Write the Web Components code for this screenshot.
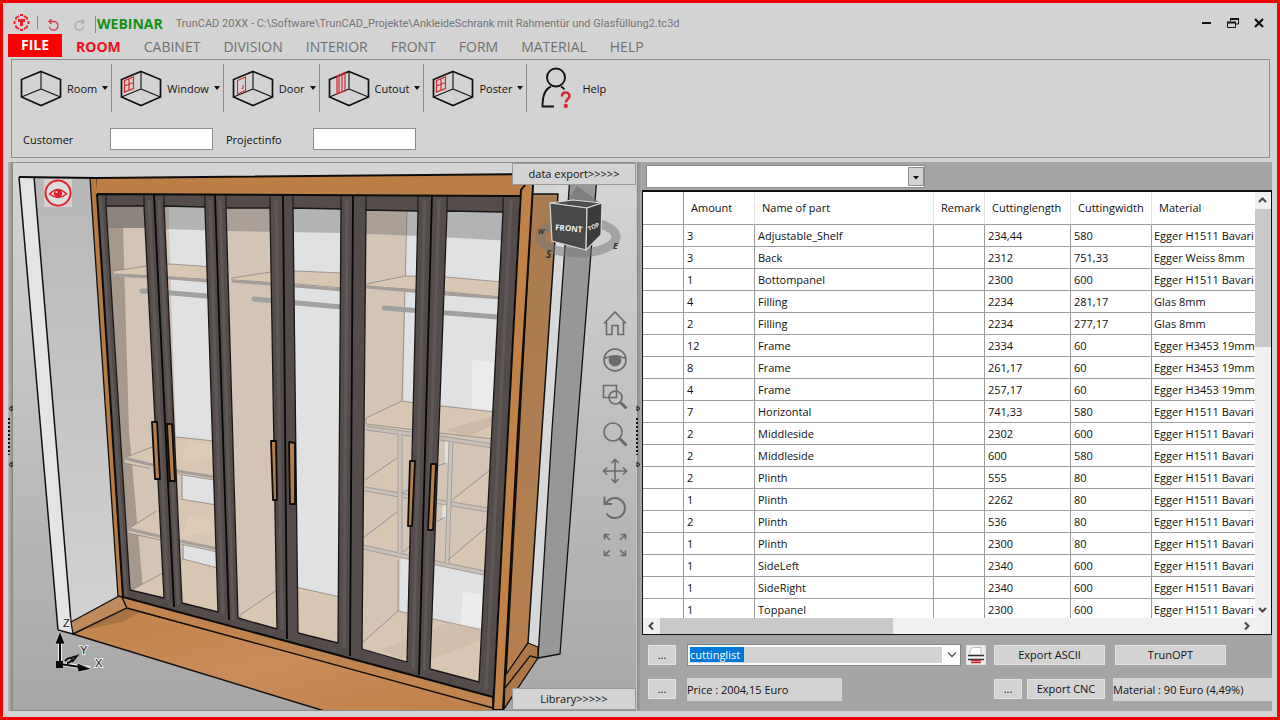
<!DOCTYPE html>
<html lang="en">
<head>
<meta charset="utf-8">
<title>TrunCAD 20XX</title>
<style>
html,body{margin:0;height:100%}
body{font-family:"Open Sans","Noto Sans",sans-serif;font-size:11px;color:#111}
</style>
</head>
<body>
<app-window>
  <title-bar slot="title" tag="WEBINAR">TrunCAD 20XX - C:\Software\TrunCAD_Projekte\AnkleideSchrank mit Rahmentür und Glasfüllung2.tc3d</title-bar>
  <ribbon-tabs slot="tabs"></ribbon-tabs>
  <ribbon-panel slot="ribbon">
    <ribbon-item icon="room" menu>Room</ribbon-item>
    <ribbon-item icon="window" menu>Window</ribbon-item>
    <ribbon-item icon="door" menu>Door</ribbon-item>
    <ribbon-item icon="cutout" menu>Cutout</ribbon-item>
    <ribbon-item icon="window" menu>Poster</ribbon-item>
    <ribbon-item icon="help">Help</ribbon-item>
    <ribbon-field slot="fields" name="customer">Customer</ribbon-field>
    <ribbon-field slot="fields" name="projectinfo">Projectinfo</ribbon-field>
  </ribbon-panel>
  <pane-splitter slot="main" side="left"></pane-splitter>
  <scene-view slot="main"></scene-view>
  <pane-splitter slot="main" side="right"></pane-splitter>
  <export-pane slot="main"></export-pane>
</app-window>

<script>
const define = (name, html, setup) => {
  const tpl = document.createElement('template');
  tpl.innerHTML = html;
  customElements.define(name, class extends HTMLElement {
    constructor() {
      super();
      this.attachShadow({mode: 'open'}).append(tpl.content.cloneNode(true));
    }
    connectedCallback() { if (setup) setup(this, this.shadowRoot); }
  });
};

define('app-window', `
<style>
:host{display:flex;flex-direction:column;box-sizing:border-box;min-height:100vh;border:3px solid #f00000;background:#d3d3d3;padding:0 5px 6px}
main{flex:1;display:grid;grid-template-columns:5px minmax(0,623fr) 6px minmax(0,630fr);margin-top:4px}
</style>
<slot name="title"></slot><slot name="tabs"></slot><slot name="ribbon"></slot>
<main><slot name="main"></slot></main>`);

define('title-bar', `
<style>
:host{display:flex;align-items:center;height:31px;padding:8px 7px 0 5px;box-sizing:border-box;color:#757575;font:11px Roboto,sans-serif}
button{all:unset;display:block;line-height:0}
i{width:1px;background:#8a8a8a;height:13px;margin:0 9px 0 7px}
i.b{height:17px;margin:3px 1px 0 9px}
b{font:bold 14px/18px "Open Sans",sans-serif;color:#149014;padding-top:3px;margin-right:13px}
.t{flex:1;white-space:nowrap;overflow:hidden;padding-top:1px}
.undo{padding:6px 15px 0 0}.redo{padding-top:6px}
.win{display:flex;gap:14px}
</style>
<svg width="17" height="17" viewBox="0 0 17 17" fill="none" stroke="#ee2030" stroke-width="2"><path d="M3 5.500V4L6 2M11 2l3 2v1.500M3 11.500V13l3 2M11 15l3-2v-1.500M1.500 7v3M15.500 7v3M7 1h3M7 16h3"/><path d="M5 5h7v3h-2v4H7V8H5z" fill="#ee2030" stroke="none"/></svg>
<i></i>
<button class="undo" aria-label="Undo"><svg width="12" height="13" viewBox="0 0 12 13" fill="none" stroke="#d43a45" stroke-width="1.300"><path d="M2 2.500h5a4.300 4.300 0 1 1-4.600 5M4.500 0 2 2.500 4.500 5"/></svg></button>
<button class="redo" aria-label="Redo"><svg width="12" height="13" viewBox="0 0 12 13" fill="none" stroke="#aaa" stroke-width="1.300"><path d="M10 2.500H5a4.300 4.300 0 1 0 4.600 5M7.500 0 10 2.500 7.500 5"/></svg></button>
<i class="b"></i><b></b>
<span class="t"><slot></slot></span>
<span class="win">
<button aria-label="Minimize"><svg width="12" height="12"><path d="M1 6h9" stroke="#111" stroke-width="2"/></svg></button>
<button aria-label="Restore"><svg width="12" height="12" fill="none" stroke="#111"><path d="M3.500 4V1.500h8V7H9"/><path d="M3 2h9" stroke-width="2"/><path d="M.500 5.500h8v5h-8z"/><path d="M0 5.500h9" stroke-width="2"/></svg></button>
<button aria-label="Close"><svg width="12" height="12"><path d="M2 2l8 8M10 2l-8 8" stroke="#111" stroke-width="2.200"/></svg></button>
</span>`, (el, r) => r.querySelector('b').textContent = el.getAttribute('tag'));

define('ribbon-tabs', `
<style>
:host{display:block}
nav{display:flex;align-items:center;gap:23px;height:23px;font-size:14px}
a{color:#6f6f6f;text-decoration:none;line-height:21px;padding-top:2px}
.file{background:#fb0000;color:#fff;font-weight:bold;width:54px;text-align:center;margin-right:-9px;padding:0 0 2px}
.on{color:#ee1020;font-weight:bold}
</style>
<nav><a class="file" href="#file">FILE</a><a class="on" href="#room">ROOM</a><a href="#cabinet">CABINET</a><a href="#division">DIVISION</a><a href="#interior">INTERIOR</a><a href="#front">FRONT</a><a href="#form">FORM</a><a href="#material">MATERIAL</a><a href="#help">HELP</a></nav>`);

define('ribbon-panel', `
<style>
:host{display:block;border:1px solid #8c8c8c;margin:2px 2px 0 3px}
.items{display:flex;height:56px;align-items:center}
.fields{display:flex;align-items:center;padding:12px 11px 7px;gap:13px}
</style>
<div class="items"><slot></slot></div>
<div class="fields"><slot name="fields"></slot></div>`);

const hexBox = inner => `<svg width="42" height="38" viewBox="0 0 42 38" fill="none" stroke="#111"><path d="M21 2.500 40.500 10.500V28L21 36.500 1.500 28V10.500z" stroke-width="1.700"/><path d="M21 2.500V20M21 20 1.500 28M21 20l19.500 8" stroke-width="1.100"/>${inner}</svg>`;
const icons = {
  room: hexBox(''),
  window: hexBox('<path d="M4.500 11.500 13.500 8v11.500L4.500 23zM9 10v11.500M4.500 17l9-3.500" stroke="#d82832" stroke-width="1.200"/>'),
  door: hexBox('<path d="M5.500 25V11.500L13.500 8v13.500zM11 16v3.500M11 19.500H9.500" stroke="#d82832" stroke-width="1.100"/>'),
  cutout: hexBox('<path d="M9 8 11 6v18l-2 1zM11 6l3-1v18l-3 1M14 5l3-1.500V22l-3 1" stroke="#d82832" stroke-width="1.200"/>'),
  help: `<svg width="32" height="44" viewBox="0 0 32 44" fill="none" stroke="#111" stroke-width="1.900"><circle cx="16" cy="11.500" r="9"/><path d="M11 20.500C5 23 2.500 30 2.500 40.500H14M21 20.500q2 1 3.500 3"/><path d="M22 30.500c0-5.500 7.500-5 7.500-.500 0 3-3.700 3-3.700 6.500" stroke="#d82832" stroke-width="2.600"/><circle cx="25.800" cy="40" r="1.200" fill="#d82832" stroke="#d82832"/></svg>`
};
define('ribbon-item', `
<style>
:host{display:flex;height:48px;align-items:center}
:host([menu]){border-right:1px solid #8c8c8c}
button{all:unset;display:flex;align-items:center;padding:0 3px 0 8px;white-space:nowrap}
svg{display:block}
.l{margin-left:5px}
.c{border:3px solid transparent;border-top:4px solid #111;border-bottom:0;margin-left:5px}
:host([icon=help]) button{padding-left:13px}
:host([icon=help]) .l{margin-left:10px}
:host(:not([menu])) .c{display:none}
</style>
<button><span class="ic"></span><span class="l"><slot></slot></span><span class="c"></span></button>`,
(el, r) => r.querySelector('.ic').innerHTML = icons[el.getAttribute('icon')]);

define('ribbon-field', `
<style>
:host{display:flex;align-items:center}
label{width:87px}
input{box-sizing:border-box;width:103px;height:22px;border:1px solid #8c8c8c;background:#fff;padding:0 4px;font:inherit;margin:0}
</style>
<label for="f"><slot></slot></label><input id="f" type="text">`);

define('pane-splitter', `
<style>
:host{display:flex;flex-direction:column;align-items:flex-start;justify-content:center;background:linear-gradient(90deg,#b8b8b8,#858585);gap:6px}
:host([side=right]){background:linear-gradient(90deg,#c8c8c8 1px,#8a8a8a 1px,#aaa)}
.dots{width:2px;height:37px;background:repeating-linear-gradient(#111 0 2px,transparent 2px 4px)}
svg{display:block}
:host([side=right]) svg{transform:scaleX(-1)}
</style>
<svg width="5" height="7"><path d="M4 1v5L1 3.500z" fill="none" stroke="#111"/></svg>
<div class="dots"></div>
<svg width="5" height="7"><path d="M4 1v5L1 3.500z" fill="none" stroke="#111"/></svg>`);

/* Wardrobe drawing, in window coordinates. */
const P = (pts, fill, extra = '') => `<polygon points="${pts}" fill="${fill}" ${extra}/>`;
const L = (d, extra = '') => `<path d="${d}" fill="none" ${extra}/>`;
const panes = ['106,206 144,206 164,598 130,590','164,206 205,207 218,612 182,603','226,208 270,208 277,629 238,618','293,208 341,209 338,643 298,633','366,210 418,211 407,662 362,649','447,211 503,212 479,682 430,669'];
const handles = ['152,422 157,422 160,479 155,479','167,424 172,424 175,481 170,481','271,441 276,441 277,500 273,500','289,442 295,443 295,504 290,504','410,461 415,461 412,526 408,526','431,464 436,464 433,530 428,530'];
const tan = '#d3c4b5', shelf = '#d9c6b2', edge = '#a59e98', white = '#e0e1e2';
const thin = `stroke="#8b8582" stroke-width=".8"`;
const interior =
  P('98,190 505,190 505,700 98,700', white) +
  P('98,190 169,190 169,228 185,700 98,700', tan) +
  P('98,190 150,190 150,228 123,228 129,430 144,600 120,600', '#a6988b') +
  P('220,190 275,190 280,700 220,700', tan) +
  P('360,190 407,190 398,700 350,700', tan) +
  /* shelves behind the left pair of doors */
  P('124,458 152,447 177,437 214,441 214,480 177,474 124,463', shelf, thin) +
  P('128,529 158,510 180,499 217,505 218,552 180,544 128,533', shelf, thin) +
  P('128,592 163,573 183,559 218,568 222,640 128,600', shelf, thin) +
  L('M124 458 177 471 214 477M128 529 180 541 218 549', `stroke="${edge}" stroke-width="3"`) +
  P('176,474 182,475 183,499 178,500', tan) + P('178,544 183,545 184,559 179,560', tan) +
  P('150,466 160,466 160,510 152,512', tan) +
  L('M182 475V499M183 545V560', thin) +
  /* floors */
  P('240,615 277,590 280,640 240,640', shelf, thin) +
  P('296,587 340,597 340,660 296,650', shelf, thin) +
  P('362,643 398,611 482,630 482,690 362,665', shelf, thin) +
  P('380,650 450,622 482,630 482,640 430,660 400,658', '#cbb8a4', 'opacity=".5"') +
  /* compartments on the right */
  P('366,418 402,401 415,403 442,406 495,412 495,440 486,573 408,557 363,548', tan) +
  P('366,418 402,401 415,403 442,406 495,412 493,439 440,433 366,424', shelf, thin) +
  P('365,480 397,458 397,490 365,486', shelf) + P('363,540 397,514 397,552 363,546', shelf) +
  P('452,500 490,470 488,508', shelf) + P('448,561 487,527 485,570', shelf) +
  P('445,441 449,441 448,463 445,463', white) + P('443,504 447,504 446,518 442,518', white) +
  L('M366 428 440 438 493 446M365 489 440 502 488 510M363 547 408 557 484 573', `stroke="${edge}" stroke-width="5"`) +
  L('M366 428 440 438 493 446M365 489 440 502 488 510M363 547 408 557 484 573', 'stroke="#c6beb7" stroke-width="3"') +
  L('M400 434V553M451 442 447 563', `stroke="${edge}" stroke-width="5"`) +
  L('M400 434V553M451 442 447 563', 'stroke="#c9c1ba" stroke-width="3"') +
  L('M365 480 397 458M363 538 397 512M452 500 490 470M448 560 487 527M398 560V611M407 211 402 401M403 493 414 486M437 466 446 463M403 552 410 546M436 522 445 517', thin) +
  P('472,360 494,362 494,410 472,408', '#ebebec') + P('463,592 482,594 482,628 461,624', '#ececed') +
  /* hanging shelves and rods */
  P('113,271 147,266 170,264 215,267 215,280 170,277 113,274', shelf, thin) +
  P('232,278 271,272 296,271 343,273 343,288 296,284 232,280', shelf, thin) +
  P('366,284 405,276 446,277 502,282 501,297 446,292 366,286', shelf, thin) +
  L('M113 275 170 278 208 281M232 281 296 286 343 290M366 287 446 294 502 298', `stroke="${edge}" stroke-width="3"`) +
  L('M142 291H148L207 296M254 299 341 307M384 308 498 317', 'stroke="#a0a0a1" stroke-width="5" stroke-linecap="round"') +
  P('98,190 510,190 510,241 420,236 343,233 230,231 164,229 146,228 98,228', '#606065', 'opacity=".36"') +
  P('190,440 214,446 214,458 180,462', '#e6d0b8', 'opacity=".5"') + P('188,515 217,522 217,532 182,536', '#e6d0b8', 'opacity=".5"') +
  P('445,430 494,416 494,424 470,436', '#c2ad99', 'opacity=".5"');
const stiles = 'M154 195 174 607M215 195 229 620M283 196 287 639M353 196 350 656M432 196 419 675';
const scene = `
<defs>
<linearGradient id="bg" x2="0" y2="1"><stop offset="0" stop-color="#d6d6d6"/><stop offset=".2" stop-color="#d4d4d4"/><stop offset=".8" stop-color="#a6a6a6"/><stop offset="1" stop-color="#a2a2a2"/></linearGradient>
<linearGradient id="wood" x2="1" y2="1"><stop offset="0" stop-color="#c08349"/><stop offset=".5" stop-color="#c98c5a"/><stop offset="1" stop-color="#bf7f49"/></linearGradient>
<linearGradient id="side" x2="0" y2="1"><stop offset="0" stop-color="#a87b50"/><stop offset="1" stop-color="#b5804f"/></linearGradient>
<linearGradient id="wall" x2="0" y2="1"><stop offset="0" stop-color="#b7b7b7"/><stop offset="1" stop-color="#d2d2d2"/></linearGradient>
<clipPath id="glass">${panes.map(p => `<polygon points="${p}"/>`).join('')}</clipPath>
</defs>
<rect x="-400" y="0" width="2000" height="900" fill="url(#bg)"/>
<g stroke-linejoin="round">
${P('19,177 34,177 71,622 73,634 58,630', '#e4e4e4')}
${P('34,177 90,177 118,595 71,622', 'url(#wall)')}
${L('M34 177 71 622M58 630 73 634M19 177 58 630', 'stroke="#111" stroke-width="1.500"')}
${P('71,622 121,595 127,608 73,634', '#bd8b5c', 'stroke="#111" stroke-width="1.300"')}
${P('73,634 127,608 493,707 495,713 331,713', 'url(#wood)', 'stroke="#111" stroke-width="1.500"')}
${P('82,630 127,608 140,612 122,622', '#8e6238', 'opacity=".5"')}
${P('121,595 493,694 493,708 127,608', '#c0844f', 'stroke="#111" stroke-width="1.300"')}
${P('90,178 97,178 123,597 118,596', '#b67a42', 'stroke="#111" stroke-width="1.300"')}
${P('556,176 570,176 552,430 538,658 528,643 542,430', '#d6d8da')}
${P('570,176 597,176 577,430 560,654 538,658 552,430', '#979797')}
${L('M570 176 552 430 538 658 560 654 577 430 597 176', 'stroke="#111" stroke-width="1.300"')}
${P('532,194 558,194 542,430 528,643 506,676', 'url(#side)', 'stroke="#111" stroke-width="1.500"')}
${P('528,643 538,647 538,658 504,709 505,676', '#ad7745', 'stroke="#111" stroke-width="1.300"')}
${L('M505 688 530 656 538 658', 'stroke="#111" stroke-width="1.300"')}
${P('97,178 532,174 532,185 520,196 97,194', '#bb7e44')}
${P('97,194 520,196 493,697 123,597', '#544c4b')}
${L('M100 196 126 596M149 200 168 600M159 200 178 604M210 200 223 614M220 200 233 620M276 200 282 630M347 200 344 648M425 200 413 668M439 200 424 670M511 200 486 690', 'stroke="#605856" stroke-width="3"')}
<g clip-path="url(#glass)">${interior}</g>
${panes.map(p => P(p, 'none', 'stroke="#1a1718" stroke-width="1.300"')).join('')}
${L(stiles, 'stroke="#080808" stroke-width="1.800"')}
${L('M97 194 520 196M97 194 123 597 493 697M19 177 97 178 532 174', 'stroke="#0c0c0c" stroke-width="2"')}
${L('M106 195V206M144 195V206M164 195V206M205 195V207M226 195V207M270 195V208M293 196V208M341 196V209M366 196V210M418 196V211M447 196V211M503 196V212', 'stroke="#151213" stroke-width="1"')}
${P('521,190 532,176 533,186 518,430 503,710 493,710 508,430', '#c08246', 'stroke="#0c0c0c" stroke-width="2"')}
${handles.map(p => P(p, '#b57c4c', 'stroke="#0c0c0c" stroke-width="1.800"')).join('')}
</g>
<g>
<path d="M568 199 577 186 602 204z" fill="#6f6f6f" opacity=".6"/>
<ellipse cx="578" cy="237" rx="38" ry="16" fill="none" stroke="#777" stroke-width="9" opacity=".5"/>
<g stroke="#d6d6d6" stroke-width="1.200" stroke-linejoin="round"><path d="M550 203 573 200 602 203 587 208z" fill="#4d4d4d"/><path d="M550 203 587 208 586 250 552 241z" fill="#484848"/><path d="M587 208 602 203 601 235 586 250z" fill="#3b3b3b"/></g>
<g font-family="Open Sans,sans-serif" font-weight="bold">
<text x="555" y="230" font-size="8" fill="#f4f4f4" transform="rotate(5 555 230)">FRONT</text>
<text x="589" y="231" font-size="6" fill="#e8e8e8" transform="rotate(-24 589 231)">TOP</text>
<g font-style="italic" fill="#333"><text x="613" y="249" font-size="9">E</text><text x="546" y="258" font-size="10">S</text><text x="538" y="234" font-size="7">W</text></g></g>
</g>
<g stroke="#eee" stroke-width="4" fill="none" stroke-linejoin="round"><path d="M60 664V634M60 664 90 668"/></g>
<g fill="#0a0a0a" stroke="#eee" stroke-width=".6"><path d="M60 631 65 644H55z"/><path d="M92 669 77 663 78 672z"/></g>
<path d="M60 664V642M60 664 80 667" stroke="#0a0a0a" stroke-width="2"/><path d="M56 661h7v7h-7z" fill="#0a0a0a"/>
<path d="M65 661c3-4 8-4 7-1-2 3-5 3-5 3M70 658l7-2-5 6" fill="none" stroke="#0a0a0a" stroke-width="1.800"/>
<g font-family="Liberation Sans,sans-serif" font-size="11" fill="#111" stroke="#eee" stroke-width="2" paint-order="stroke"><text x="63" y="627">Z</text><text x="80" y="654">Y</text><text x="95" y="667">X</text></g>`;

define('scene-view', `
<style>
:host{display:block;position:relative;overflow:hidden;border:1px solid #8c8c8c;border-width:1px 0;min-height:400px}
.scene{position:absolute;inset:0;width:100%;height:100%}
button{all:unset;box-sizing:border-box}
.tab{position:absolute;right:0;width:124px;height:22px;background:#d3d3d3;border:1px solid #9a9a9a;text-align:center;line-height:20px}
.top{top:0}.bot{bottom:0}
.eye{position:absolute;left:31px;top:16px;width:28px;height:28px;line-height:0}
.tools{position:absolute;right:8px;top:147px;display:flex;flex-direction:column;gap:11px}
.tools button,.tools svg{display:block;width:26px;height:26px}
.tools svg{fill:none;stroke:#6b6b6b;stroke-width:1.6}
</style>
<svg class="scene" viewBox="13 163 623 547" preserveAspectRatio="xMidYMid slice" role="img" aria-label="Wardrobe in room">${scene}</svg>
<button class="eye" aria-label="Visibility"><svg width="28" height="28" viewBox="0 0 28 28"><path d="M0 0h28v28H0z" fill="#d8cfcf"/><circle cx="14" cy="14" r="12.500" fill="#ddd" stroke="#e0222a" stroke-width="2"/><path d="M5.500 15Q14 6 22.500 15 14 22 5.500 15z" fill="none" stroke="#e0222a" stroke-width="1.500"/><circle cx="14" cy="14.500" r="4.200" fill="#e0222a"/><circle cx="12.500" cy="13" r="1" fill="#fff"/></svg></button>
<button class="tab top">data export&gt;&gt;&gt;&gt;&gt;</button>
<div class="tools">
<button aria-label="Home"><svg viewBox="0 0 26 26"><path d="M2 13.500 13 2l11 11.500M4.500 12v12.500h5.500V15.500h6v9h5.500V12"/></svg></button>
<button aria-label="Look"><svg viewBox="0 0 26 26"><circle cx="13" cy="13" r="11"/><path d="M2.500 11.500Q13 6 23.500 11.500"/><path d="M8.500 10a5.500 5.500 0 1 0 9 0q-4.500-2-9 0z" fill="#6b6b6b"/></svg></button>
<button aria-label="Zoom window"><svg viewBox="0 0 26 26"><path d="M8 13.500H1.500V1.500h13V6"/><path d="M6.500 13.500h8V6"/><circle cx="13.500" cy="13.500" r="6.500"/><path d="m18.500 18.500 6 6" stroke-width="3"/></svg></button>
<button aria-label="Zoom"><svg viewBox="0 0 26 26"><circle cx="11" cy="11" r="9"/><path d="m17.500 17.500 7 7" stroke-width="3"/></svg></button>
<button aria-label="Pan"><svg viewBox="0 0 26 26"><path d="M13 2v22M2 13h22M9.500 5 13 1.500 16.500 5M9.500 21l3.500 3.500 3.500-3.500M5 9.500 1.500 13 5 16.500M21 9.500l3.500 3.500-3.500 3.500"/></svg></button>
<button aria-label="Rotate"><svg viewBox="0 0 26 26" style="stroke-width:2"><path d="M4 8.500A10 10 0 1 1 4.500 18.500M2.500 1.500v7.500H10"/></svg></button>
<button aria-label="Fit"><svg viewBox="0 0 26 26"><path d="m8 8-5-5M2.500 7.500v-5h5M18 8l5-5M18.500 2.500h5v5M8 18l-5 5M2.500 18.500v5h5M18 18l5 5M23.500 18.500v5h-5"/></svg></button>
</div>
<button class="tab bot">Library&gt;&gt;&gt;&gt;&gt;</button>`);

const rows = [
['3','Adjustable_Shelf','234,44','580','Egger H1511 Bavari'],['3','Back','2312','751,33','Egger Weiss 8mm'],
['1','Bottompanel','2300','600','Egger H1511 Bavari'],['4','Filling','2234','281,17','Glas 8mm'],
['2','Filling','2234','277,17','Glas 8mm'],['12','Frame','2334','60','Egger H3453 19mm'],
['8','Frame','261,17','60','Egger H3453 19mm'],['4','Frame','257,17','60','Egger H3453 19mm'],
['7','Horizontal','741,33','580','Egger H1511 Bavari'],['2','Middleside','2302','600','Egger H1511 Bavari'],
['2','Middleside','600','580','Egger H1511 Bavari'],['2','Plinth','555','80','Egger H1511 Bavari'],
['1','Plinth','2262','80','Egger H1511 Bavari'],['2','Plinth','536','80','Egger H1511 Bavari'],
['1','Plinth','2300','80','Egger H1511 Bavari'],['1','SideLeft','2340','600','Egger H1511 Bavari'],
['1','SideRight','2340','600','Egger H1511 Bavari'],['1','Toppanel','2300','600','Egger H1511 Bavari']
];

define('parts-table', `
<style>
:host{flex:1;display:grid;grid-template:minmax(200px,1fr) 16px/minmax(0,1fr) 16px;border:1px solid #111;border-top-width:2px;background:#fff}
.clip{overflow:hidden;contain:size}
table{border-collapse:separate;border-spacing:0;table-layout:fixed;width:100%}
th,td{box-sizing:border-box;border:solid #9c9c9c;border-width:0 1px 1px 0;padding:0 0 0 3px;height:22px;text-align:left;white-space:nowrap;font-weight:normal;line-height:20px}
th{height:33px;padding:0 0 0 7px;border-right-color:#e2e2e2}
th:first-child{border-right-color:#9c9c9c}
th:last-child,td:last-child{border-right:0}
td:last-child{padding-left:2px}
tr:last-child td{border-bottom:0}
.v{display:flex;flex-direction:column;background:#f0f0f0}
.v svg,.h svg{display:block;flex:none;stroke:#444;stroke-width:2;fill:none}
.v div{height:138px;background:#c9c9c9}.v span,.h span{flex:1}
.h{display:flex;background:#f0f0f0}.h div{width:38%;background:#c9c9c9}
.corner{background:#f0f0f0}
</style>
<div class="clip"><table>
<colgroup><col style="width:41px"><col style="width:71px"><col style="width:179px"><col style="width:51px"><col style="width:86px"><col style="width:81px"><col></colgroup>
<thead><tr><th></th><th>Amount</th><th>Name of part</th><th>Remark</th><th>Cuttinglength</th><th>Cuttingwidth</th><th>Material</th></tr></thead><tbody></tbody></table></div>
<div class="v" aria-hidden="true"><svg width="16" height="17"><path d="m4 10 3.500-3.500L11 10"/></svg><div></div><span></span><svg width="16" height="17"><path d="m4 7 3.500 3.500L11 7"/></svg></div>
<div class="h" aria-hidden="true"><svg width="17" height="16"><path d="M10 4.500 6.500 8l3.500 3.500"/></svg><div></div><span></span><svg width="17" height="16"><path d="M7 4.500 10.500 8 7 11.500"/></svg></div>
<div class="corner"></div>`,
(el, r) => r.querySelector('tbody').innerHTML = rows.map(([a, n, l, w, m]) => `<tr><td></td><td>${a}</td><td>${n}</td><td></td><td>${l}</td><td>${w}</td><td>${m}</td></tr>`).join(''));

define('export-pane', `
<style>
:host{display:flex;flex-direction:column;background:#a5a5a5;min-width:0}
select,button{font:inherit;color:#111;margin:0;box-sizing:border-box;border-radius:0}
.combo,.sel{position:relative;display:flex}
.combo{width:283px;padding:3px 0 2px 4px;box-sizing:border-box}
.filter{width:279px;height:23px;border:1px solid #8c8c8c;appearance:none;background:#fff}
.combo svg{position:absolute;right:1px;top:5px;pointer-events:none}
button{height:20px;background:#d3d3d3;border:1px solid #e2e2e2;padding:0;line-height:18px;text-align:center}
.list{appearance:none;width:274px;height:22px;border:1px solid #888;padding:0 3px 2px 2px;color:#fff;line-height:17px;
 background:linear-gradient(#0078d7,#0078d7) 2px 2px/54px 15px no-repeat,linear-gradient(#d3d3d3,#d3d3d3) 2px 2px/252px 16px no-repeat,#fff}
.list option{color:#111}
.sel{margin-right:5px}
.sel svg{position:absolute;right:3px;top:7px;pointer-events:none}
.row{display:flex;align-items:center;height:24px}
.rows{padding:8px 0 10px 6px;display:flex;flex-direction:column;gap:10px}
.dots{width:28px;margin-right:11px}
.print{width:20px;margin-right:8px;background:#eee;line-height:0}
.wide{width:111px;margin-right:10px}
.out{background:#d3d3d3;height:23px;line-height:23px;width:155px;margin-right:152px}
.d2{width:28px;margin-right:5px}.cnc{width:78px;margin-right:8px}
.mat{flex:1;width:auto;margin:0;white-space:nowrap}
</style>
<div class="combo"><select class="filter" aria-label="Filter"></select><svg width="16" height="19"><path d="M.500.500h15v18H.500z" fill="#d3d3d3" stroke="#8c8c8c"/><path d="M5 9h6l-3 3.500z" fill="#111"/></svg></div>
<parts-table></parts-table>
<div class="rows">
<div class="row"><button class="dots">...</button><span class="sel"><select class="list" aria-label="List"><option>cuttinglist</option></select><svg width="12" height="8"><path d="m2 1.500 4 4 4-4" fill="none" stroke="#555" stroke-width="1.300"/></svg></span><button class="print" aria-label="Print"><svg width="18" height="18" viewBox="0 0 18 18" fill="none"><path d="M3 8V4l3-2.500h8V8" fill="#fff" stroke="#bbb"/><path d="M1 9.500h16M1 13.500h16" stroke="#333" stroke-width="1.400"/><path d="M4 14.500h10M4 16.500h10" stroke="#d82832" stroke-width="1.300"/></svg></button><button class="wide">Export ASCII</button><button class="wide">TrunOPT</button></div>
<div class="row"><button class="dots">...</button><output class="out">Price : 2004,15 Euro</output><button class="d2">...</button><button class="cnc">Export CNC</button><output class="out mat">Material : 90 Euro (4,49%)</output></div>
</div>`);
</script>
</body>
</html>
